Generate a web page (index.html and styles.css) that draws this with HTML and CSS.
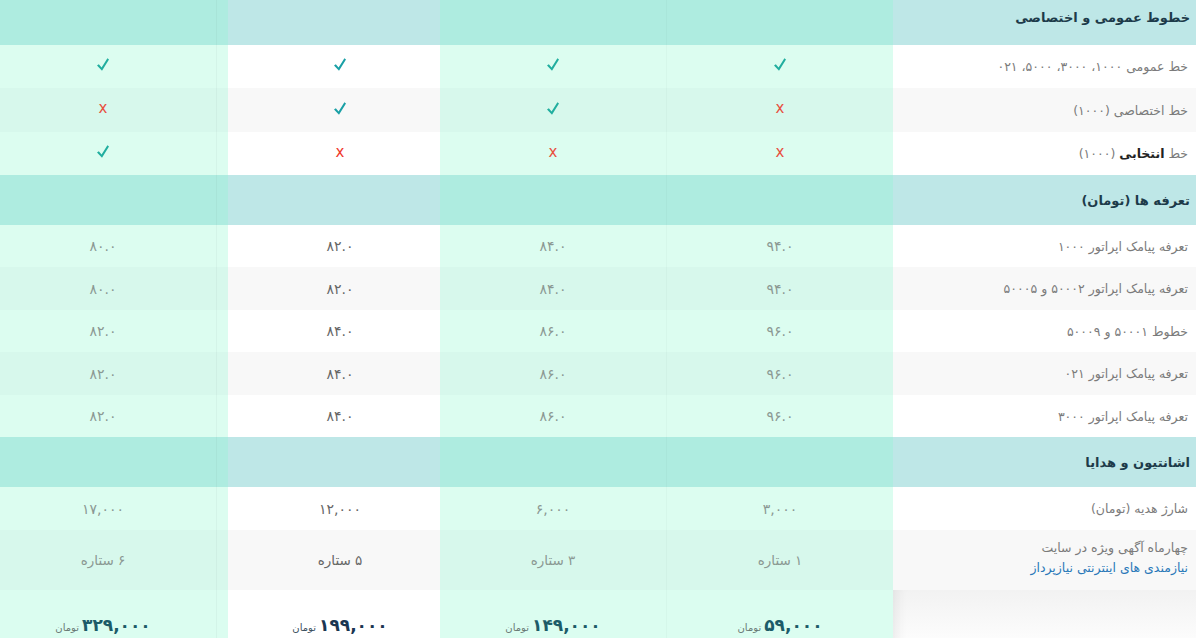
FILE: index.html
```html
<!DOCTYPE html>
<html lang="fa" dir="rtl">
<head>
<meta charset="utf-8">
<title>مقایسه تعرفه ها</title>
<link rel="stylesheet" href="styles.css">
</head>
<body>
<div class="table">
  <div class="row head h1">
    <div class="cell lab">خطوط عمومی و اختصاصی</div>
    <div class="cell m c1"></div><div class="cell m c2"></div><div class="cell w c3"></div><div class="cell m c4"></div>
  </div>
  <div class="row odd r43">
    <div class="cell lab">خط عمومی ۱۰۰۰، ۳۰۰۰، ۵۰۰۰، ۰۲۱</div>
    <div class="cell m c1"><svg class="ok" viewBox="0 0 12 13"><path d="M0 7.4 L1.8 6.2 L4.6 9.4 L10.4 0.3 L12 1.5 L5 12.8 Z"/></svg></div>
    <div class="cell m c2"><svg class="ok" viewBox="0 0 12 13"><path d="M0 7.4 L1.8 6.2 L4.6 9.4 L10.4 0.3 L12 1.5 L5 12.8 Z"/></svg></div>
    <div class="cell w c3"><svg class="ok" viewBox="0 0 12 13"><path d="M0 7.4 L1.8 6.2 L4.6 9.4 L10.4 0.3 L12 1.5 L5 12.8 Z"/></svg></div>
    <div class="cell m c4"><svg class="ok" viewBox="0 0 12 13"><path d="M0 7.4 L1.8 6.2 L4.6 9.4 L10.4 0.3 L12 1.5 L5 12.8 Z"/></svg></div>
  </div>
  <div class="row even r44">
    <div class="cell lab">خط اختصاصی (۱۰۰۰)</div>
    <div class="cell m c1"><span class="no">x</span></div>
    <div class="cell m c2"><svg class="ok" viewBox="0 0 12 13"><path d="M0 7.4 L1.8 6.2 L4.6 9.4 L10.4 0.3 L12 1.5 L5 12.8 Z"/></svg></div>
    <div class="cell w c3"><svg class="ok" viewBox="0 0 12 13"><path d="M0 7.4 L1.8 6.2 L4.6 9.4 L10.4 0.3 L12 1.5 L5 12.8 Z"/></svg></div>
    <div class="cell m c4"><span class="no">x</span></div>
  </div>
  <div class="row odd r43">
    <div class="cell lab"><span>خط <b class="strong">انتخابی</b> (۱۰۰۰)</span></div>
    <div class="cell m c1"><span class="no">x</span></div>
    <div class="cell m c2"><span class="no">x</span></div>
    <div class="cell w c3"><span class="no">x</span></div>
    <div class="cell m c4"><svg class="ok" viewBox="0 0 12 13"><path d="M0 7.4 L1.8 6.2 L4.6 9.4 L10.4 0.3 L12 1.5 L5 12.8 Z"/></svg></div>
  </div>

  <div class="row head h50">
    <div class="cell lab">تعرفه ها (تومان)</div>
    <div class="cell m c1"></div><div class="cell m c2"></div><div class="cell w c3"></div><div class="cell m c4"></div>
  </div>
  <div class="row odd r42">
    <div class="cell lab">تعرفه پیامک اپراتور ۱۰۰۰</div>
    <div class="cell m c1">۹۴.۰</div><div class="cell m c2">۸۴.۰</div><div class="cell w c3">۸۲.۰</div><div class="cell m c4">۸۰.۰</div>
  </div>
  <div class="row even r43">
    <div class="cell lab">تعرفه پیامک اپراتور ۵۰۰۰۲ و ۵۰۰۰۵</div>
    <div class="cell m c1">۹۴.۰</div><div class="cell m c2">۸۴.۰</div><div class="cell w c3">۸۲.۰</div><div class="cell m c4">۸۰.۰</div>
  </div>
  <div class="row odd r42">
    <div class="cell lab">خطوط ۵۰۰۰۱ و ۵۰۰۰۹</div>
    <div class="cell m c1">۹۶.۰</div><div class="cell m c2">۸۶.۰</div><div class="cell w c3">۸۴.۰</div><div class="cell m c4">۸۲.۰</div>
  </div>
  <div class="row even r43">
    <div class="cell lab">تعرفه پیامک اپراتور ۰۲۱</div>
    <div class="cell m c1">۹۶.۰</div><div class="cell m c2">۸۶.۰</div><div class="cell w c3">۸۴.۰</div><div class="cell m c4">۸۲.۰</div>
  </div>
  <div class="row odd r42">
    <div class="cell lab">تعرفه پیامک اپراتور ۳۰۰۰</div>
    <div class="cell m c1">۹۶.۰</div><div class="cell m c2">۸۶.۰</div><div class="cell w c3">۸۴.۰</div><div class="cell m c4">۸۲.۰</div>
  </div>

  <div class="row head h50">
    <div class="cell lab">اشانتیون و هدایا</div>
    <div class="cell m c1"></div><div class="cell m c2"></div><div class="cell w c3"></div><div class="cell m c4"></div>
  </div>
  <div class="row odd r43">
    <div class="cell lab">شارژ هدیه (تومان)</div>
    <div class="cell m c1">۳,۰۰۰</div><div class="cell m c2">۶,۰۰۰</div><div class="cell w c3">۱۲,۰۰۰</div><div class="cell m c4">۱۷,۰۰۰</div>
  </div>
  <div class="row even r60">
    <div class="cell lab two"><span>چهارماه آگهی ویژه در سایت</span><a class="link" href="#">نیازمندی های اینترنتی نیازپرداز</a></div>
    <div class="cell m c1 star">۱ ستاره</div><div class="cell m c2 star">۳ ستاره</div><div class="cell w c3 star">۵ ستاره</div><div class="cell m c4 star">۶ ستاره</div>
  </div>

  <div class="row price">
    <div class="cell lab"></div>
    <div class="cell m c1"><div class="amount"><span class="num">۵۹,۰۰۰</span><span class="unit">تومان</span></div><span class="btn"></span></div>
    <div class="cell m c2"><div class="amount"><span class="num">۱۴۹,۰۰۰</span><span class="unit">تومان</span></div><span class="btn"></span></div>
    <div class="cell w c3"><div class="amount"><span class="num">۱۹۹,۰۰۰</span><span class="unit">تومان</span></div><span class="btn"></span></div>
    <div class="cell m c4"><div class="amount"><span class="num">۳۲۹,۰۰۰</span><span class="unit">تومان</span></div><span class="btn"></span></div>
  </div>
</div>
</body>
</html>
```

FILE: styles.css
```css
html, body {
  margin: 0;
  padding: 0;
  overflow: hidden;
  background: #ffffff;
}
body {
  font-family: "DejaVu Sans", "Noto Sans", sans-serif;
  direction: rtl;
}
.table {
  width: 1196px;
  display: flex;
  flex-direction: column;
}
.row {
  display: grid;
  grid-template-columns: 303px 226px 227px 212px 228px;
}
.cell {
  display: flex;
  align-items: center;
  justify-content: center;
  font-size: 14px;
  color: #8b9893;
  box-sizing: border-box;
}
.cell.lab {
  justify-content: flex-start;
  padding-right: 8px;
  color: #7b7b7b;
  font-size: 12.5px;
}
.cell.c3 { padding-left: 12px; color: #666666; }
.cell.c4 {
  padding-right: 22px;
  background-image: linear-gradient(rgba(0,0,0,0.035), rgba(0,0,0,0.035));
  background-size: 1px 100%;
  background-repeat: no-repeat;
  background-position: right 11px top;
}
.cell.c2 {
  border-right: 1px solid rgba(0,0,0,0.025);
}

.r42 { height: 42px; }
.r43 { height: 43px; }
.r44 { height: 44px; }
.r60 { height: 60px; }
.h1 { height: 45px; }
.h50 { height: 50px; }

.head .cell { background-color: #aeece0; }
.head .cell.lab, .head .cell.w { background-color: #bee7e7; }
.head .cell.lab {
  font-weight: bold;
  color: #1d3b4a;
  font-size: 13px;
  padding-right: 6px;
}
.h1 .cell.lab { align-items: flex-start; padding-top: 10px; }

.odd .cell.m { background-color: #dcfdf0; }
.even .cell.m { background-color: #d7f8ec; }
.odd .cell.lab, .odd .cell.w { background-color: #ffffff; }
.even .cell.lab, .even .cell.w { background-color: #f8f8f8; }

.strong { color: #222; font-weight: bold; }

.ok { width: 12px; height: 13px; fill: #21ae9f; margin-top: -4px; }
.c3 .ok { fill: #1aa0a6; }
.no { color: #e8503e; font-size: 15px; line-height: 1; margin-top: -3px; }
.c3 .no { color: #f0392b; }

.cell.two {
  align-items: flex-start;
  flex-direction: column;
  justify-content: flex-start;
  padding-top: 8px;
  line-height: 20px;
}
.link { color: #2a78b8; text-decoration: none; }
.star { font-size: 13.5px; }

.price { height: 90px; }
.price .cell {
  flex-direction: column;
  justify-content: flex-start;
  padding-top: 25px;
}
.price .cell.m { background-color: #dbfdf0; }
.price .cell.w { background-color: #ffffff; }
.price .cell.lab {
  background: linear-gradient(to bottom, #f2f2f2, #ffffff 70%);
  box-shadow: inset 14px 0 12px -10px rgba(0,0,0,0.07);
}
.amount {
  display: flex;
  align-items: baseline;
  gap: 3px;
}
.num {
  font-size: 17px;
  font-weight: bold;
  color: #1c5b68;
}
.c3 .num { color: #1b3652; }
.unit {
  font-size: 10px;
  color: #6a7a76;
}
.c3 .unit { color: #3c5060; }
.btn {
  display: block;
  width: 100px;
  height: 34px;
  margin-top: 3px;
  border-radius: 3px;
  background: #e6f4ea;
  border-top: 1px solid #d4e9dc;
}
.c3 .btn { background: #f2f6f4; }
```
